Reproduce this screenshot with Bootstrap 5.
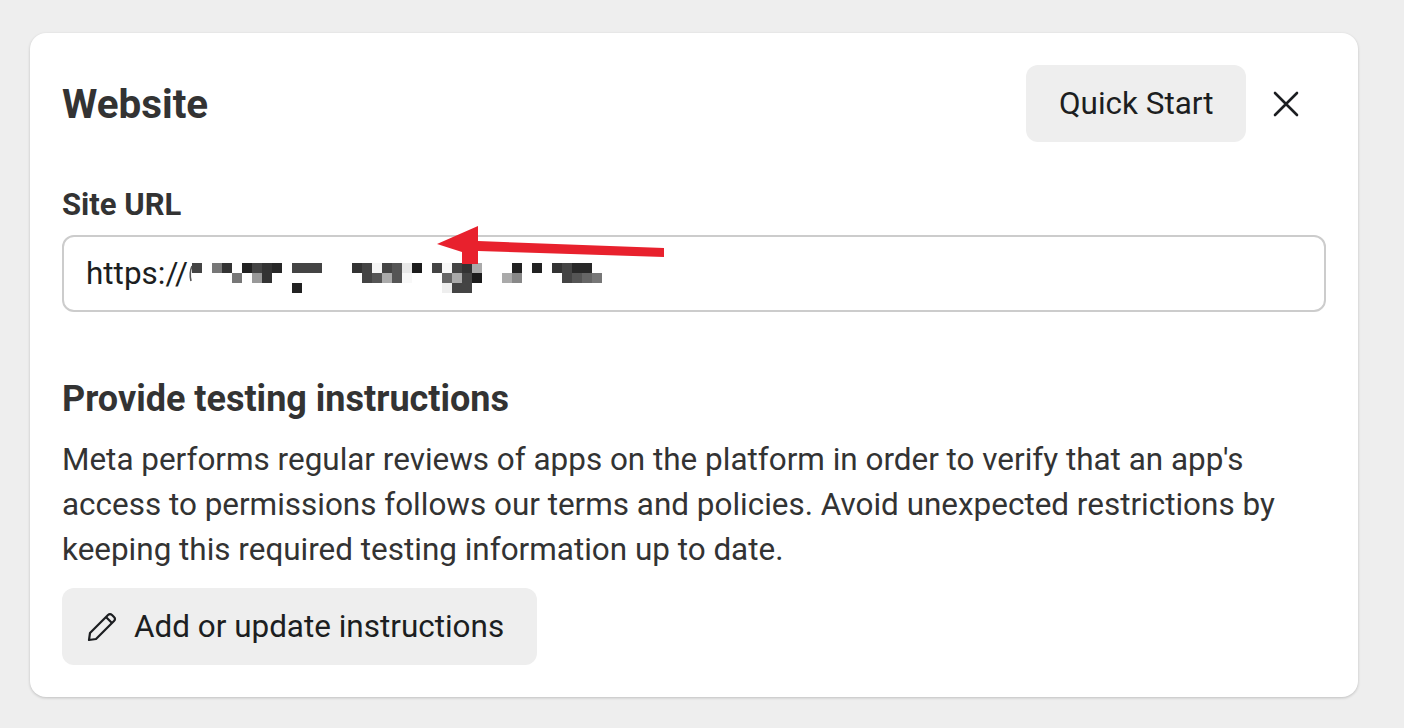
<!DOCTYPE html>
<html lang="en"><head><meta charset="utf-8"><title>Website</title>
<link href="https://cdn.jsdelivr.net/npm/bootstrap@5.3.0/dist/css/bootstrap.min.css" rel="stylesheet">
<style>
html,body{height:100%;overflow:hidden}
body{background:#eee;font-family:Roboto,"Liberation Sans",sans-serif;color:#333;padding:33px 46px 0 30px;}
.site-card{height:664px;border:0;border-radius:16px;box-shadow:0 1px 3px rgba(0,0,0,.2);padding:32px;}
.site-title{font-size:40.4px;font-weight:700;line-height:1;margin:0;color:#333;padding-top:3px}
.grey-btn{background:#eee;border:0;border-radius:12px;font-size:31.45px;line-height:37px;color:#1c1e21;padding:20px 32.5px}
.grey-btn:hover{background:#e4e4e4}
.x-btn{background:none;border:0;padding:0;width:26px;height:26px;margin:0 27px;display:flex}
.lbl{font-size:31px;font-weight:700;line-height:36px;margin:45px 0 12px;color:#333;display:block}
.url-wrap{position:relative;margin-bottom:67px}
.url-field{height:77px;border:2px solid #ccc;border-radius:12px;font-size:31.45px;color:#1c1e21;padding:0 22px;box-shadow:none!important}
.overlay{position:absolute;left:0;top:0;pointer-events:none;overflow:visible}
.sec-head{font-size:36px;font-weight:700;line-height:40px;margin:0 0 18px;color:#333}
.sec-text{font-size:31.45px;line-height:45.2px;margin:0 0 15.5px;color:#333}
.edit-btn{padding:20px 33px 20px 25px;gap:17px}
</style></head><body>
<div class="card site-card">
<div class="d-flex align-items-center justify-content-between">
<h1 class="site-title">Website</h1>
<div class="d-flex align-items-center">
<button class="btn grey-btn" type="button">Quick Start</button>
<button class="x-btn" type="button" aria-label="Close"><svg width="26" height="26" viewBox="0 0 26 26"><path d="M2 2 24 24M24 2 2 24" stroke="#1c1e21" stroke-width="2.6" stroke-linecap="round"/></svg></button>
</div></div>
<label class="lbl" for="u">Site URL</label>
<div class="url-wrap">
<input id="u" class="form-control url-field" value="https://">
<svg class="overlay" width="700" height="90" viewBox="62 236 700 90">
<path d="M192 267Q189 274 191 282" fill="none" stroke="#555" stroke-width="1.6"/>
<g id="mos"></g>
<path d="M437 245 478 227 478 242 664 249 664 258 478 252 478 265 462 265 462 253Z" fill="#e8212d"/>
</svg></div>
<h2 class="sec-head">Provide testing instructions</h2>
<p class="sec-text">Meta performs regular reviews of apps on the platform in order to verify that an app's access to permissions follows our terms and policies. Avoid unexpected restrictions by keeping this required testing information up to date.</p>
<div><button class="btn grey-btn edit-btn d-inline-flex align-items-center" type="button">
<svg width="30" height="30" viewBox="0 0 30 30" fill="none" stroke="#1c1e21" stroke-width="2.2" stroke-linejoin="round"><path d="M2 28 3 21 21 3Q23 1 25 3L27 5Q29 7 27 9L9 27Z"/><path d="M19 5 25 11"/></svg>
<span>Add or update instructions</span></button></div>
</div>
<script>
const rows=[[264,{0:'#444',2:'#777',3:'#333',5:'#222',6:'#444',7:'#333',8:'#282828',10:'#444',11:'#444',12:'#444',16:'#333',17:'#444',18:'#f5f5f5',19:'#444',20:'#555',21:'#e8e8e8',22:'#1c1c1c',24:'#444',25:'#f8f8f8',26:'#444',27:'#333',28:'#aaa',32:'#222',34:'#222',36:'#333',37:'#444',38:'#282828',39:'#282828'}],
[274,{4:'#777',6:'#999',7:'#333',17:'#444',18:'#555',19:'#aaa',20:'#555',21:'#f8f8f8',25:'#666',26:'#aaa',27:'#444',28:'#1c1c1c',31:'#aaa',32:'#888',37:'#444',38:'#555',39:'#666',40:'#777'}],
[284,{10:'#222',25:'#eee',26:'#444',27:'#444'}]];
let s='';for(const [y,c] of rows)for(const k in c)s+=`<rect x="${192+10*k}" y="${y}" width="10" height="10" fill="${c[k]}"/>`;
document.getElementById('mos').innerHTML=s;
</script>
<script src="https://cdn.jsdelivr.net/npm/bootstrap@5.3.0/dist/js/bootstrap.bundle.min.js"></script>
</body></html>
